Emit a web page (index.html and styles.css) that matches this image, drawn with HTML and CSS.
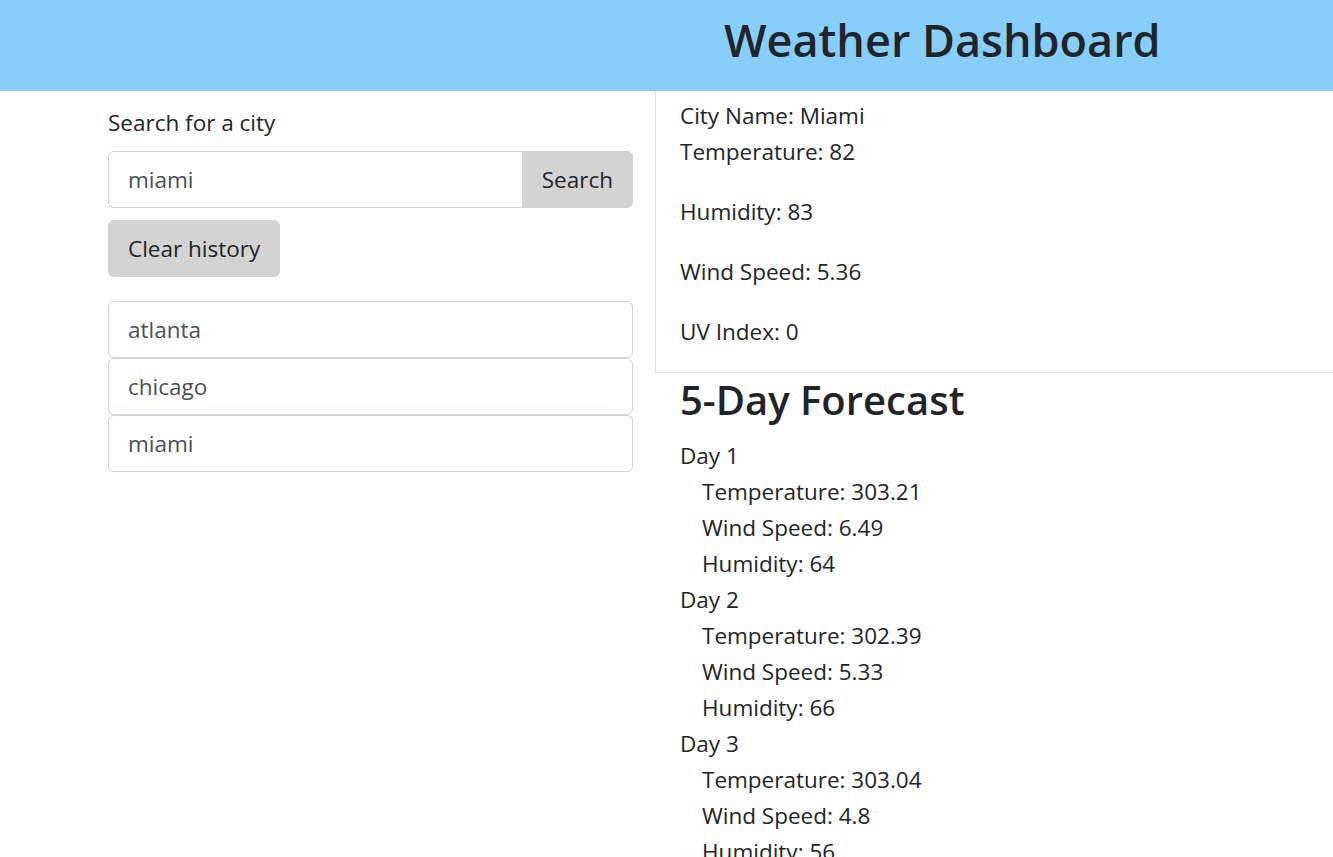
FILE: index.html
```html
<!DOCTYPE html>
<html lang="en">
<head>
<meta charset="utf-8">
<title>Weather Dashboard</title>
<link rel="stylesheet" href="styles.css">
</head>
<body>
<header class="header">
  <h1 class="title">Weather Dashboard</h1>
</header>
<main class="layout">
  <section class="sidebar">
    <label class="search-label" for="city">Search for a city</label>
    <div class="input-group">
      <input id="city" class="city-input" type="text" value="miami">
      <button class="btn search-btn" type="button">Search</button>
    </div>
    <button class="btn clear-btn" type="button">Clear history</button>
    <ul class="history">
      <li><button class="history-item" type="button">atlanta</button></li>
      <li><button class="history-item" type="button">chicago</button></li>
      <li><button class="history-item" type="button">miami</button></li>
    </ul>
  </section>
  <section class="content">
    <div class="current">
      <div class="city-name">City Name: Miami</div>
      <p class="stat">Temperature: 82</p>
      <p class="stat">Humidity: 83</p>
      <p class="stat">Wind Speed: 5.36</p>
      <p class="stat">UV Index: 0</p>
    </div>
    <div class="forecast">
      <h3 class="forecast-title">5-Day Forecast</h3>
      <ul class="days">
        <li class="day">Day 1
          <ul class="day-stats">
            <li>Temperature: 303.21</li>
            <li>Wind Speed: 6.49</li>
            <li>Humidity: 64</li>
          </ul>
        </li>
        <li class="day">Day 2
          <ul class="day-stats">
            <li>Temperature: 302.39</li>
            <li>Wind Speed: 5.33</li>
            <li>Humidity: 66</li>
          </ul>
        </li>
        <li class="day">Day 3
          <ul class="day-stats">
            <li>Temperature: 303.04</li>
            <li>Wind Speed: 4.8</li>
            <li>Humidity: 56</li>
          </ul>
        </li>
      </ul>
    </div>
  </section>
</main>
</body>
</html>
```
FILE: styles.css
```css
* { box-sizing: border-box; }

html, body {
  margin: 0;
  padding: 0;
}

body {
  font-family: "Open Sans", "Noto Sans", sans-serif;
  font-size: 22.5px;
  line-height: 36px;
  color: #212529;
  background: #fff;
}

.header {
  height: 91px;
  background: #87cefa;
  display: flex;
  align-items: flex-start;
  padding: 11px 0 0 724px;
}

.title {
  margin: 0;
  font-size: 45px;
  font-weight: 600;
  line-height: 58px;
  color: #212529;
}

.layout {
  display: flex;
  gap: 22px;
  padding-left: 108px;
}

.sidebar {
  width: 525px;
  flex: none;
  padding-top: 12px;
}

.search-label {
  display: block;
  padding-top: 2px;
  margin-bottom: 10px;
}

.input-group {
  display: flex;
  height: 57px;
}

.city-input {
  flex: 1;
  min-width: 0;
  height: 57px;
  border: 1px solid #ced4da;
  border-right: none;
  border-radius: 6px 0 0 6px;
  padding: 0 19px;
  font: inherit;
  color: #495057;
  background: #fff;
  outline: none;
}

.btn {
  font: inherit;
  color: #212529;
  background: #d3d3d3;
  border: 1px solid transparent;
  height: 57px;
  padding: 0 19px;
  cursor: pointer;
}

.search-btn {
  border-radius: 0 6px 6px 0;
}

.clear-btn {
  display: block;
  margin-top: 12px;
  border-radius: 6px;
}

.history {
  list-style: none;
  margin: 24px 0 0;
  padding: 0;
}

.history-item {
  display: block;
  width: 100%;
  height: 57px;
  text-align: left;
  font: inherit;
  color: #495057;
  background: #fff;
  border: 1px solid #ced4da;
  border-radius: 6px;
  padding: 0 19px;
}

.content {
  flex: 1;
  min-width: 0;
}

.current {
  border-left: 1px solid #dee2e6;
  border-bottom: 1px solid #dee2e6;
  padding: 7px 24px 0;
}

.stat {
  margin: 0 0 24px;
}

.stat:last-child {
  margin-bottom: 22px;
}

.forecast {
  padding-left: 25px;
}

.forecast-title {
  margin: 2px 0 13px;
  font-size: 40px;
  font-weight: 600;
  line-height: 50px;
}

.days {
  list-style: none;
  margin: 0;
  padding: 0;
}

.day-stats {
  list-style: none;
  margin: 0;
  padding-left: 22px;
}
```
